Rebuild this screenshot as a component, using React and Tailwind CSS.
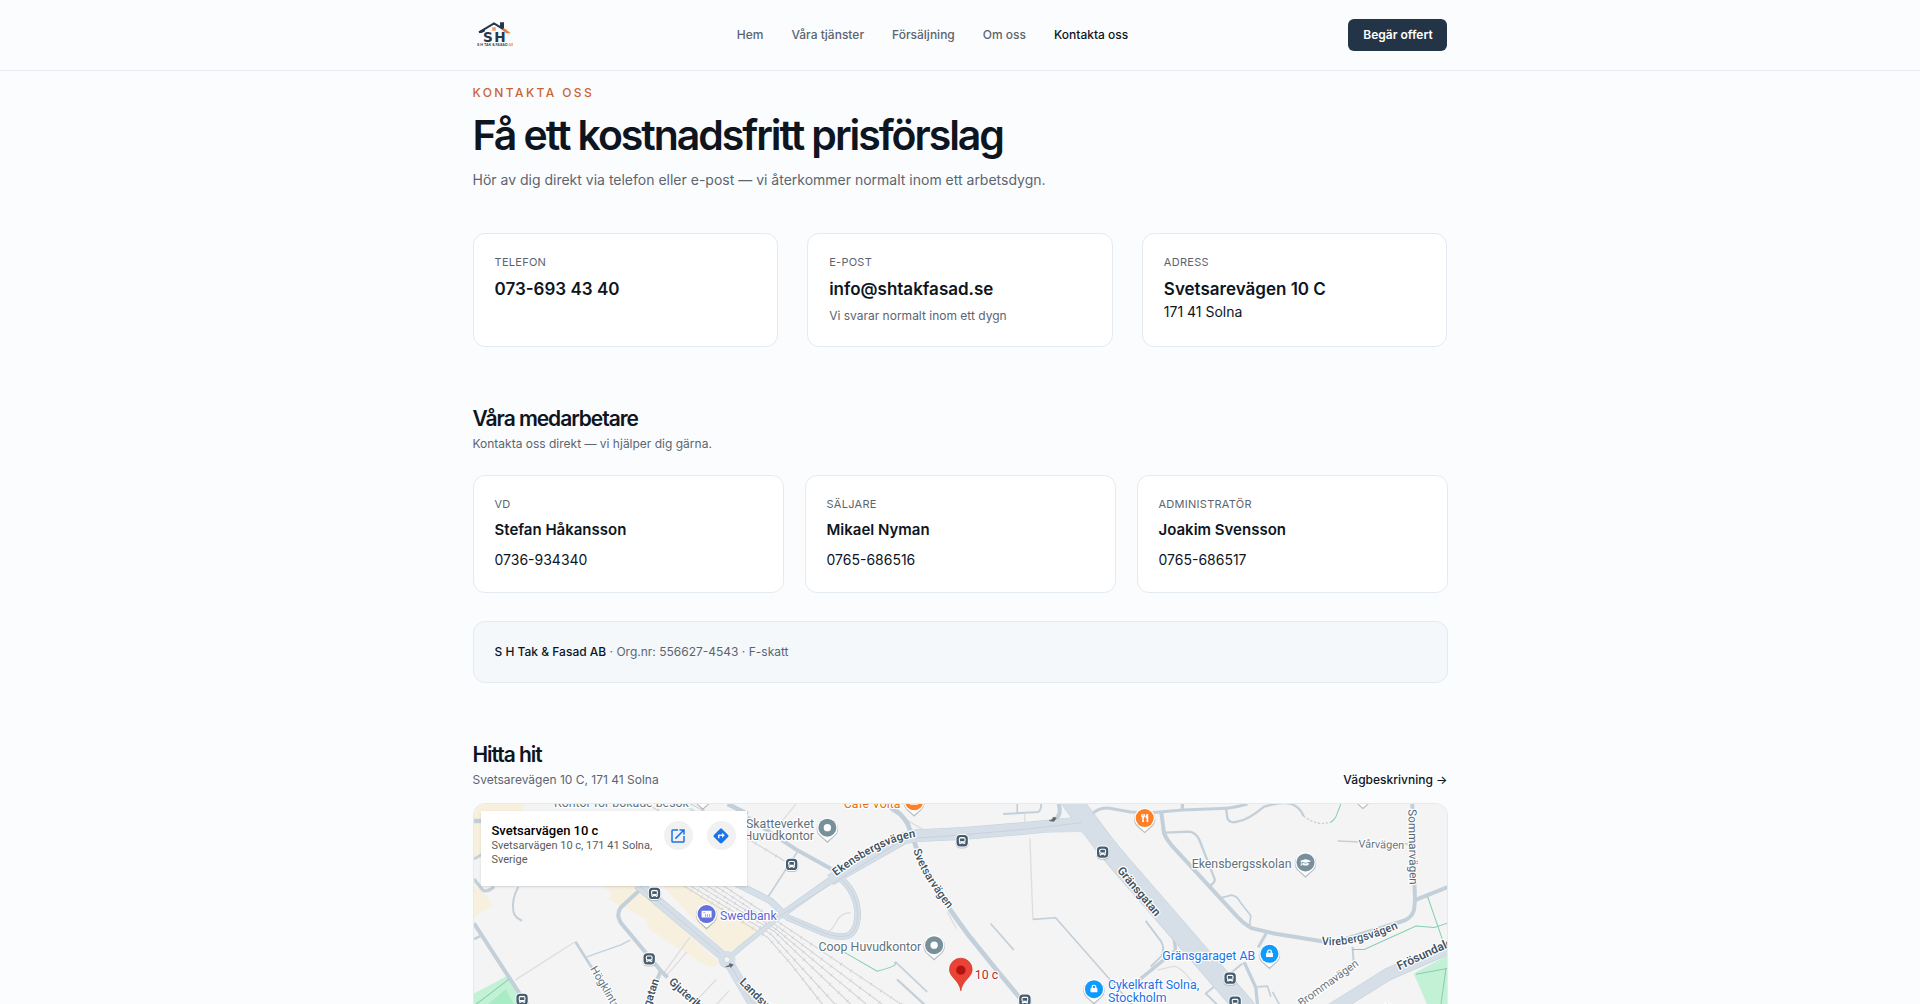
import { FaBus, FaUtensils, FaGraduationCap, FaLock } from 'react-icons/fa'
import { MdOpenInNew, MdDirections } from 'react-icons/md'

const links = ['Hem', 'Våra tjänster', 'Försäljning', 'Om oss', 'Kontakta oss']

const staff = [
    { role: 'VD', name: 'Stefan Håkansson', phone: '0736-934340' },
    { role: 'Säljare', name: 'Mikael Nyman', phone: '0765-686516' },
    { role: 'Administratör', name: 'Joakim Svensson', phone: '0765-686517' },
]

const stops = [[541, 268], [525, 464], [144, 586], [952, 181], [1463, 110], [1884, 144], [1651, 588], [2266, 522], [2281, 594]]

// [path, width]
const roads = [
    ['M0 51H40', 14],
    ['M0 165L25 150', 8],
    ['M0 225L26 258Q38 266 60 248', 10],
    ['M0 358L143 578L180 640', 12],
    ['M0 405L24 393', 8],
    ['M133 248Q112 285 118 322Q122 340 144 350', 6],
    ['M304 413L358 498', 8],
    ['M338 458L440 422L468 408', 4],
    ['M500 255L440 310Q425 330 440 356L560 500L580 520', 12],
    ['M560 500L500 640', 12],
    ['M490 240L758 466L860 640', 30],
    ['M758 466L800 430L918 335', 16],
    ['M918 335L1068 228', 20],
    ['M1068 228L1290 102L1350 92', 36],
    ['M1310 96L1470 88L1660 72L1820 56', 38],
    ['M760 225L888 290L940 340L1040 383Q1095 405 1125 393Q1150 375 1150 325Q1145 260 1095 220', 20],
    ['M760 0L820 30', 14],
    ['M820 40L968 138L1090 205', 12],
    ['M968 145L880 280', 5],
    ['M1248 10Q1280 25 1300 60L1328 138L1345 180L1428 318Q1450 350 1478 388L1568 500L1670 622', 14],
    ['M1586 30L1690 24Q1700 20 1700 0', 6],
    ['M1628 0V28', 5],
    ['M1752 0Q1765 40 1730 52', 12],
    ['M1780 -24L1798 0L1888 120L1938 180L2188 468L2310 610L2340 660', 62],
    ['M1848 34Q1870 10 1900 12L1968 24L2028 26L2123 18L2258 13Q2290 8 2318 0', 9],
    ['M2123 0V18', 10],
    ['M2253 8L2258 43Q2265 60 2290 52Q2320 48 2368 8Q2420 -8 2450 0Q2476 10 2486 36', 7],
    ['M2060 26L2068 88Q2075 105 2090 123L2288 338Q2305 358 2330 372L2398 388L2545 412L2600 408L2770 355Q2815 345 2818 310L2820 288L2812 0', 12],
    ['M2073 86L2140 83Q2162 83 2174 108L2220 225Q2222 235 2203 248', 7],
    ['M2233 283L2270 273Q2288 276 2295 292L2328 335L2324 368', 5],
    ['M2820 288L2920 248', 12],
    ['M2588 111L2800 120', 5],
    ['M2374 388L2350 430', 9],
    ['M2308 474L2343 550L2350 620', 10],
    ['M2303 478L2193 568L2228 602', 6],
    ['M2013 350L2058 410Q2072 432 2060 456L2028 488', 6],
    ['M2098 405L2103 438L1990 530', 10],
    ['M2348 548L2378 546L2388 578', 5],
    ['M2393 563L2413 600', 5],
    ['M2633 428L2636 473L2460 610', 6],
    ['M2560 622L2740 510L2920 432', 38],
    ['M1675 346L1743 341L1903 523L1980 610', 5],
    ['M1548 358L1618 438', 5],
    ['M1268 526L1360 610', 7],
    ['M1263 473L1358 563', 5],
]

// painted as a thin line down the middle of the wider streets
const seams = [
    'M490 240L758 466L860 640',
    'M1290 105L1470 92L1660 75L1820 56',
    'M940 340L1040 383Q1095 405 1125 393Q1150 375 1150 325Q1145 260 1095 220',
    'M918 335L1290 105',
]

const paths = [
    'M303 413L123 528', 'M648 398L568 508', 'M638 443L578 513', 'M726 526L658 598', 'M764 560L700 630',
    'M1666 103L1675 346', 'M1418 323L1446 373', 'M1250 20L1351 80', 'M965 0L920 55',
    'M1128 326Q1100 325 1085 355Q1075 375 1060 385', 'M1650 30L1651 66',
    'M2048 498L2098 486Q2120 490 2153 533',
]

const rails = [
    'M620 240L880 400L950 480L1060 620', 'M640 240L890 390L1100 620', 'M665 240L900 382L1150 620',
    'M690 240L905 375L1200 620', 'M715 240L912 368L1250 620', 'M740 240L918 358L1310 620',
    'M520 0L700 110', 'M620 0L830 110L930 170', 'M650 0L860 110',
]

const greenPaths = [
    'M1108 443L1208 501Q1245 492 1262 482V473', 'M2566 56Q2580 45 2583 38L2598 0',
    'M2633 436H2668L2823 366L2878 370L2920 356', 'M2858 278L2903 408', 'M2823 510L2920 492', 'M2913 492L2898 600',
    'M0 605L105 525',
]

function Pin({ x, y, color, children }) {
    return (
        <g transform={`translate(${x} ${y})`}>
            <path d="M0 43L-22 23A32 32 0 1 1 22 23Z" fill="#6b7780" opacity="0.45" transform="translate(0 3)" />
            <path d="M0 41L-22 22A31 31 0 1 1 22 22Z" fill="#fff" />
            <circle r="27" fill={color} />
            {children}
        </g>
    )
}

function Label({ x, y, angle = 0, color = '#5f7380', size = 37, bold, end, children }) {
    return (
        <text
            transform={`translate(${x} ${y}) rotate(${angle})`}
            fill={color}
            fontSize={size}
            fontWeight={bold ? 600 : 400}
            textAnchor={end ? 'end' : 'start'}
            stroke="#fff"
            strokeWidth="7"
            strokeLinejoin="round"
            paintOrder="stroke"
        >
            {children}
        </text>
    )
}

function CurvedLabel({ id, d, size = 36, weight = 500, children }) {
    return (
        <>
            <path id={id} d={d} fill="none" />
            <text fontSize={size} fontWeight={weight} fill="#3f5365" stroke="#fff" strokeWidth="7" strokeLinejoin="round" paintOrder="stroke">
                <textPath href={`#${id}`}>{children}</textPath>
            </text>
        </>
    )
}

function MapDrawing() {
    return (
        <svg viewBox="0 0 2916 1200" className="block w-full" fontFamily="Roboto, sans-serif" role="img" aria-label="Karta">
            <rect width="2916" height="1200" fill="#f4f4f4" />
            <g fill="#f8f0de">
                <path d="M0 0H155L140 25L60 60V165H0Z" />
                <path d="M0 245L25 262L58 303L0 340Z" />
                <path d="M380 240L413 268L403 285L515 345L525 375L610 430L700 488H722L735 475L480 240Z" />
                <path d="M560 240H625L855 373L800 425L770 440L740 435Z" />
            </g>
            <path d="M0 568L103 513L135 560L160 700H0Z" fill="#c3f1d5" />
            <path d="M30 610L95 555L125 610Z" fill="#a8ebc4" />
            <path d="M2816 508L2920 453V700H2900Z" fill="#c3f1d5" />
            <g fill="none" stroke="#dedede" strokeWidth="4">
                {paths.map((d) => <path key={d} d={d} />)}
            </g>
            <g fill="none" stroke="#cfd1d4" strokeWidth="3">
                {rails.map((d) => <path key={d} d={d} />)}
            </g>
            <g fill="none" stroke="#cfd1d4" strokeWidth="12" strokeDasharray="2 34">
                {rails.map((d) => <path key={d} d={d} />)}
            </g>
            <g fill="none" stroke="#c3d0da" strokeLinejoin="round">
                {roads.map(([d, w]) => <path key={d} d={d} strokeWidth={w} />)}
            </g>
            <g fill="none" stroke="#d6dfe7" strokeLinejoin="round">
                {roads.filter(([, w]) => w > 14).map(([d, w]) => <path key={d} d={d} strokeWidth={w - 3} />)}
            </g>
            <path d="M1770 42L1850 60L1870 120L1818 84L1700 86V56Z" fill="#d6dfe7" />
            <path d="M1762 36L1768 20L1782 38Z" fill="#f4f4f4" />
            <g fill="none" stroke="#c0ccd7" strokeWidth="2">
                {seams.map((d) => <path key={d} d={d} />)}
            </g>
            <circle cx="758" cy="466" r="26" fill="#d6dfe7" />
            <circle cx="758" cy="466" r="9" fill="#f4f4f4" stroke="#c0ccd7" strokeWidth="2" />
            <path d="M754 488L766 483V478L777 482L769 490V486Z" fill="#5c6670" stroke="#5c6670" strokeWidth="2" />
            <path d="M1724 50L1735 46V40L1745 42L1738 52Z" fill="#5c6670" stroke="#5c6670" strokeWidth="2" />
            <path d="M2486 36Q2510 55 2540 59L2566 56" fill="none" stroke="#c3d0da" strokeWidth="4" strokeDasharray="7 5" />
            <g fill="none" stroke="#86cdb0" strokeWidth="3">
                {greenPaths.map((d) => <path key={d} d={d} />)}
            </g>

            {stops.map(([x, y]) => (
                <g key={`${x}-${y}`} transform={`translate(${x} ${y})`}>
                    <rect x="-20" y="-17" width="40" height="40" rx="14" fill="#8795a1" opacity="0.5" />
                    <rect x="-20" y="-20" width="40" height="40" rx="14" fill="#fff" />
                    <rect x="-17" y="-17" width="34" height="34" rx="11" fill="#465c6f" />
                    <FaBus x="-11" y="-11" size="22" color="#fff" />
                </g>
            ))}

            <Label x={240} y={10}>Kontor för bokade besök</Label>
            <Label x={1019} y={71} end>Skatteverket</Label>
            <Label x={1019} y={107} end>Huvudkontor</Label>
            <Label x={1108} y={13} color="#e8710a">Café Volta</Label>
            <Label x={737} y={348} color="#5f66d0">Swedbank</Label>
            <Label x={1340} y={441} end>Coop Huvudkontor</Label>
            <Label x={1501} y={525} color="#b3282d">10 c</Label>
            <Label x={2450} y={193} end>Ekensbergsskolan</Label>
            <Label x={2341} y={469} color="#1a73e8" end>Gränsgaraget AB</Label>
            <Label x={1900} y={555} color="#1a73e8">Cykelkraft Solna,</Label>
            <Label x={1900} y={592} color="#1a73e8">Stockholm</Label>
            <Label x={2650} y={130} size={33} color="#66757f" angle={2}>Vårvägen</Label>
            <Label x={2800} y={16} size={35} color="#56697a" angle={89}>Sommarvägen</Label>
            <Label x={2480} y={608} size={33} color="#66757f" angle={-36}>Brommavägen</Label>
            <Label x={348} y={494} size={33} color="#66757f" angle={60}>Högklintavägen</Label>
            <Label x={555} y={528} size={34} color="#3f5365" angle={-72} bold end>Storgatan</Label>
            <Label x={582} y={536} size={34} color="#3f5365" angle={42} bold>Gjuteribacken</Label>
            <Label x={794} y={536} size={34} color="#3f5365" angle={45} bold>Landsvägen</Label>
            <Label x={1926} y={200} size={35} color="#3f5365" angle={50} bold>Gränsgatan</Label>
            <Label x={2773} y={498} size={36} color="#3f5365" angle={-25} bold>Frösundaleden</Label>
            <CurvedLabel id="ekensbergsvagen" d="M1085 217Q1225 110 1330 98" size={34} weight={600}>Ekensbergsvägen</CurvedLabel>
            <CurvedLabel id="svetsarvagen" d="M1317 138Q1335 215 1460 364" size={34}>Svetsarvägen</CurvedLabel>
            <CurvedLabel id="virebergsvagen" d="M2540 422Q2640 432 2790 364" size={34}>Virebergsvägen</CurvedLabel>

            <Pin x={686} y={-28} color="#7b8f9b" />
            <Pin x={1319} y={-8} color="#ff7f27"><path d="M-12 2H12V10H-12Z" fill="#fff" /></Pin>
            <Pin x={2664} y={-30} color="#7b8f9b" />
            <Pin x={1059} y={71} color="#78909c"><circle r="11" fill="#fff" /></Pin>
            <Pin x={1379} y={423} color="#78909c"><circle r="11" fill="#fff" /></Pin>
            <Pin x={697} y={330} color="#6371dc">
                <path d="M-15 -10H15V10H-15Z" fill="#fff" />
                <path d="M-10 -4H-4M-3 8V0M3 8V0M9 8V0" stroke="#6371dc" strokeWidth="2" />
            </Pin>
            <Pin x={2010} y={42} color="#ff7f27"><FaUtensils x="-13" y="-13" size="26" color="#fff" /></Pin>
            <Pin x={2492} y={175} color="#78909c"><FaGraduationCap x="-16" y="-16" size="32" color="#fff" /></Pin>
            <Pin x={2384} y={449} color="#0e9bff"><FaLock x="-12" y="-14" size="24" color="#fff" /></Pin>
            <Pin x={1858} y={555} color="#0e9bff"><FaLock x="-12" y="-14" size="24" color="#fff" /></Pin>
            <Pin x={2738} y={626} color="#2ba672" />
            <path d="M1459 560C1455 528 1425 520 1425 496A34 34 0 1 1 1493 496C1493 520 1463 528 1459 560Z" fill="#ea4335" stroke="#d13023" strokeWidth="2" />
            <circle cx="1459" cy="498" r="14" fill="#b31412" />
        </svg>
    )
}

function Logo() {
    return (
        <svg viewBox="0 0 108 78" className="h-[26px] w-9" role="img" aria-label="S H Tak & Fasad AB">
            <path d="M6 31L51 4L72 17V4H78V21L86 26" fill="none" stroke="#26364b" strokeWidth="6" />
            <path d="M6 33V28L24 20V28L14 33Z" fill="#26364b" />
            <path d="M80 18L102 34H88L76 25Z" fill="#f47c30" />
            <path d="M46 16H56V26H46Z" fill="#f47c30" />
            <path d="M51 16V26M46 21H56" stroke="#fbfcfe" strokeWidth="1" />
            <text x="18" y="59" fontFamily="DejaVu Sans, sans-serif" fontWeight="700" fontSize="41" fill="#26364b">S</text>
            <text x="52" y="59" fontFamily="DejaVu Sans, sans-serif" fontWeight="700" fontSize="41" fill="#26364b">H</text>
            <text x="0" y="73" fontFamily="Inter, sans-serif" fontWeight="600" fontSize="11" fill="#26364b">
                S H TAK &amp; FASAD <tspan fill="#f47c30">AB</tspan>
            </text>
        </svg>
    )
}

function Card({ label, children }) {
    return (
        <div className="rounded-xl border border-[#e3eaf1] bg-white px-[21px] py-5">
            <p className="text-[11px] leading-4 tracking-wide text-[#5b6570] uppercase">{label}</p>
            {children}
        </div>
    )
}

export default function App() {
    return (
        <div className="min-h-screen bg-[#fbfcfe] font-[Inter,sans-serif] text-[#0e151e]">
            <header className="border-b border-[#e6ebf3]">
                <div className="mx-auto flex h-[70px] max-w-[975px] items-center justify-between">
                    <a href="#" className="w-11 pl-1"><Logo /></a>
                    <nav className="flex gap-7 text-xs font-medium">
                        {links.map((link) => (
                            <a key={link} href="#" className={link === 'Kontakta oss' ? 'text-[#0e151e]' : 'text-[#5b6570]'}>{link}</a>
                        ))}
                    </nav>
                    <a href="#" className="flex h-8 w-[99px] items-center justify-center rounded-md bg-[#233447] text-xs font-semibold text-white">Begär offert</a>
                </div>
            </header>

            <main className="mx-auto max-w-[975px] pt-3">
                <p className="text-xs leading-5 font-medium tracking-[0.2em] text-[#c96534] uppercase">Kontakta oss</p>
                <h1 className="mt-2 text-[41px] leading-[48px] font-semibold tracking-tighter">Få ett kostnadsfritt prisförslag</h1>
                <p className="mt-2 text-sm leading-[26px] text-[#5b6570]">Hör av dig direkt via telefon eller e-post — vi återkommer normalt inom ett arbetsdygn.</p>

                <section className="mt-10 grid grid-cols-3 gap-[29px]">
                    <Card label="Telefon">
                        <a href="tel:0736934340" className="mt-1 block text-[17px] leading-[30px] font-semibold">073-693 43 40</a>
                    </Card>
                    <Card label="E-post">
                        <a href="mailto:info@shtakfasad.se" className="mt-1 block text-[17px] leading-[30px] font-semibold">info@shtakfasad.se</a>
                        <p className="mt-0.5 text-xs leading-5 text-[#5b6570]">Vi svarar normalt inom ett dygn</p>
                    </Card>
                    <Card label="Adress">
                        <p className="mt-1 text-[17px] leading-[30px] font-semibold">Svetsarevägen 10 C</p>
                        <p className="-mt-0.5 text-sm leading-5">171 41 Solna</p>
                    </Card>
                </section>

                <section className="mt-14">
                    <h2 className="text-[21px] leading-[31px] font-semibold tracking-tighter">Våra medarbetare</h2>
                    <p className="text-xs leading-5 text-[#5b6570]">Kontakta oss direkt — vi hjälper dig gärna.</p>
                    <div className="mt-[21px] grid grid-cols-3 gap-[21px]">
                        {staff.map((person) => (
                            <Card key={person.name} label={person.role}>
                                <h3 className="mt-1 text-[15px] leading-7 font-semibold">{person.name}</h3>
                                <a href={`tel:${person.phone}`} className="mt-1 block text-sm leading-6">{person.phone}</a>
                            </Card>
                        ))}
                    </div>
                    <p className="mt-7 rounded-xl border border-[#e3eaf1] bg-[#f4f8fb] px-[21px] py-5 text-xs leading-5 text-[#5b6570]">
                        <span className="font-medium text-[#0e151e]">S H Tak &amp; Fasad AB</span> · Org.nr: 556627-4543 · F-skatt
                    </p>
                </section>

                <section className="mt-14">
                    <h2 className="text-[21px] leading-[31px] font-semibold tracking-tighter">Hitta hit</h2>
                    <div className="flex items-center justify-between text-xs leading-5">
                        <p className="text-[#5b6570]">Svetsarevägen 10 C, 171 41 Solna</p>
                        <a href="#" className="font-medium">Vägbeskrivning →</a>
                    </div>
                    <div className="relative mt-[13px] overflow-hidden rounded-xl border border-[#e3eaf1]">
                        <MapDrawing />
                        <div className="absolute top-[7px] left-[7px] flex h-[75px] w-[266px] bg-white px-[11px] pt-2.5 font-[Roboto,sans-serif] shadow">
                            <div className="flex-1 pt-0.5">
                                <p className="text-[13px] leading-4 font-medium text-black">Svetsarvägen 10 c</p>
                                <p className="text-[11px] leading-[14px] text-[#5b5b5b]">Svetsarvägen 10 c, 171 41 Solna, Sverige</p>
                            </div>
                            <div className="flex gap-3.5">
                                <button type="button" aria-label="Öppna i Maps" className="flex size-[29px] items-center justify-center rounded-full bg-[#f1f1f1] text-lg text-[#1a73e8]"><MdOpenInNew /></button>
                                <button type="button" aria-label="Vägbeskrivning" className="flex size-[29px] items-center justify-center rounded-full bg-[#f1f1f1] text-lg text-[#1a73e8]"><MdDirections /></button>
                            </div>
                        </div>
                    </div>
                </section>
            </main>
        </div>
    )
}
